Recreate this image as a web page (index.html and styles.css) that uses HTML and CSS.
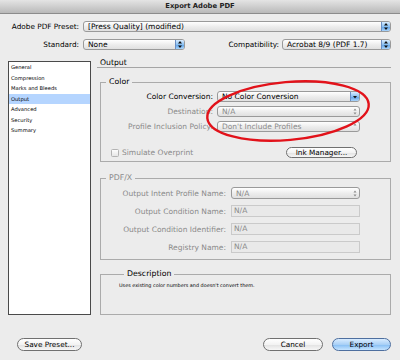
FILE: index.html
```html
<!DOCTYPE html>
<html lang="en">
<head>
    <meta charset="UTF-8">
    <title>Export Adobe PDF</title>
    <link rel="stylesheet" href="styles.css">
</head>
<body>
    <div class="titlebar">Export Adobe PDF</div>

    <div class="presets">
        <div class="preset-row">
            <label class="row-label">Adobe PDF Preset:</label>
            <div class="popup grow">
                <span class="value">[Press Quality] (modified)</span>
                <span class="stepper active"><svg width="4" height="7" viewBox="0 0 4 7"><path d="M0 2.6L2 0L4 2.6Z M0 4.4L2 7L4 4.4Z"/></svg></span>
            </div>
        </div>
        <div class="preset-row">
            <label class="row-label">Standard:</label>
            <div class="popup standard">
                <span class="value">None</span>
                <span class="stepper active"><svg width="4" height="7" viewBox="0 0 4 7"><path d="M0 2.6L2 0L4 2.6Z M0 4.4L2 7L4 4.4Z"/></svg></span>
            </div>
            <label class="compat-label">Compatibility:</label>
            <div class="popup compat">
                <span class="value">Acrobat 8/9 (PDF 1.7)</span>
                <span class="stepper active"><svg width="4" height="7" viewBox="0 0 4 7"><path d="M0 2.6L2 0L4 2.6Z M0 4.4L2 7L4 4.4Z"/></svg></span>
            </div>
        </div>
    </div>

    <div class="main">
        <ul class="sections">
            <li>General</li>
            <li>Compression</li>
            <li>Marks and Bleeds</li>
            <li class="selected">Output</li>
            <li>Advanced</li>
            <li>Security</li>
            <li>Summary</li>
        </ul>

        <div class="panel">
            <div class="panel-title">Output</div>

            <fieldset class="group color-group">
                <legend>Color</legend>
                <div class="form-grid">
                    <label>Color Conversion:</label>
                    <div class="popup">
                        <span class="value">No Color Conversion</span>
                        <span class="stepper active"><svg width="4" height="7" viewBox="0 0 4 7"><path d="M0 3L2 5.6L4 3Z"/></svg></span>
                    </div>
                    <label class="disabled">Destination:</label>
                    <div class="popup disabled">
                        <span class="value">N/A</span>
                        <span class="stepper"><svg width="4" height="7" viewBox="0 0 4 7"><path d="M0.5 2.4L2 0.4L3.5 2.4Z M0.5 4.6L2 6.6L3.5 4.6Z"/></svg></span>
                    </div>
                    <label class="disabled">Profile Inclusion Policy:</label>
                    <div class="popup disabled">
                        <span class="value">Don't Include Profiles</span>
                        <span class="stepper"><svg width="4" height="7" viewBox="0 0 4 7"><path d="M0.5 2.4L2 0.4L3.5 2.4Z"/></svg></span>
                    </div>
                </div>
                <div class="check-row">
                    <label class="checkbox disabled"><span class="box"></span>Simulate Overprint</label>
                    <button class="pill ink">Ink Manager...</button>
                </div>
            </fieldset>

            <fieldset class="group pdfx-group">
                <legend class="disabled">PDF/X</legend>
                <div class="form-grid">
                    <label class="disabled">Output Intent Profile Name:</label>
                    <div class="popup disabled">
                        <span class="value">N/A</span>
                        <span class="stepper"><svg width="4" height="7" viewBox="0 0 4 7"><path d="M0.5 2.4L2 0.4L3.5 2.4Z M0.5 4.6L2 6.6L3.5 4.6Z"/></svg></span>
                    </div>
                    <label class="disabled">Output Condition Name:</label>
                    <div class="textfield">N/A</div>
                    <label class="disabled">Output Condition Identifier:</label>
                    <div class="textfield">N/A</div>
                    <label class="disabled">Registry Name:</label>
                    <div class="textfield">N/A</div>
                </div>
            </fieldset>

            <fieldset class="group description-group">
                <legend>Description</legend>
                <p class="description">Uses existing color numbers and doesn't convert them.</p>
            </fieldset>
        </div>
    </div>

    <div class="footer">
        <button class="pill save">Save Preset...</button>
        <button class="pill cancel">Cancel</button>
        <button class="pill export">Export</button>
    </div>

    <!-- red hand-drawn marker around the color settings -->
    <svg class="annotation" width="184" height="76" viewBox="0 0 184 76">
        <ellipse cx="88" cy="36" rx="81" ry="29" transform="rotate(-5 88 36)" fill="none" stroke="#e2121a" stroke-width="2.4"/>
    </svg>
</body>
</html>
```

FILE: styles.css
```css
* {
    box-sizing: border-box;
}
body {
    margin: 0;
    width: 400px;
    height: 360px;
    position: relative;
    overflow: hidden;
    background-color: #ececec;
    font-family: "DejaVu Sans", sans-serif;
    font-size: 7.5px;
    color: #000;
}
.disabled {
    color: #8a8a8a;
}
.titlebar {
    height: 14px;
    line-height: 13px;
    text-align: center;
    font-weight: bold;
    font-size: 6.8px;
    color: #222;
    background: linear-gradient(#e4e4e4, #b9b9b9);
    border-bottom: 1px solid #8c8c8c;
}
.presets {
    padding: 7px 9px 0 0;
    display: flex;
    flex-direction: column;
    gap: 7px;
    white-space: nowrap;
}
.preset-row {
    display: flex;
    align-items: center;
    height: 11px;
}
.row-label {
    width: 79px;
    flex-shrink: 0;
    text-align: right;
    margin-right: 4px;
    font-size: 7.3px;
}
.compat-label {
    flex: 1;
    text-align: right;
    margin-right: 3px;
    font-size: 7.3px;
}
.popup {
    height: 11px;
    display: flex;
    align-items: center;
    padding-left: 4px;
    border: 1px solid #9a9a9a;
    border-radius: 3px;
    background: linear-gradient(#ffffff, #ececec 55%, #e0e0e0);
    overflow: hidden;
    white-space: nowrap;
}
.popup.grow {
    flex: 1;
}
.popup.standard {
    width: 102px;
}
.popup.compat {
    width: 109px;
}
.popup .value {
    flex: 1;
}
.stepper {
    width: 9px;
    height: 100%;
    display: flex;
    align-items: center;
    justify-content: center;
}
.stepper.active {
    background: linear-gradient(#d9ecff, #8cc1f2 50%, #5c9fe4 51%, #a9d4fb);
    border-left: 1px solid #6b8fc4;
}
.stepper svg {
    fill: #111;
}
.popup.disabled .stepper svg {
    fill: #8a8a8a;
}
.main {
    display: flex;
    gap: 6px;
    margin-top: 8px;
    padding: 0 9px 0 8px;
}
.sections {
    list-style: none;
    margin: 3px 0 0;
    padding: 0;
    width: 83px;
    height: 254px;
    flex-shrink: 0;
    background-color: #fff;
    border: 1px solid #4a4a4a;
    font-size: 5.2px;
}
.sections li {
    height: 10.5px;
    line-height: 10.5px;
    padding-left: 2px;
}
.sections li.selected {
    background-color: #b5d5ff;
}
.panel {
    flex: 1;
}
.panel-title {
    line-height: 9px;
    font-size: 7.7px;
    padding-left: 3px;
    border-bottom: 1px solid #a5a5a5;
}
.group {
    margin: 9px 0 0 3px;
    padding: 4px 30px 3px 0;
    border: 1px solid #ababab;
    min-width: 0;
}
.group legend {
    margin-left: 5px;
    padding: 0 3px;
    line-height: 10px;
    font-size: 7.8px;
}
.form-grid {
    display: grid;
    align-items: center;
    text-align: right;
    white-space: nowrap;
}
.form-grid .popup,
.form-grid .textfield {
    text-align: left;
}
.color-group .form-grid {
    grid-template-columns: 1fr 143px;
    column-gap: 4px;
    row-gap: 4px;
}
.check-row {
    display: flex;
    align-items: center;
    margin-top: 15px;
    padding-left: 10px;
}
.checkbox {
    display: flex;
    align-items: center;
}
.checkbox .box {
    width: 8px;
    height: 8px;
    margin-right: 3px;
    border: 1px solid #b3b3b3;
    border-radius: 1.5px;
    background: linear-gradient(#fdfdfd, #e6e6e6);
}
.pill {
    height: 11px;
    padding: 0;
    font-family: "DejaVu Sans", sans-serif;
    font-size: 7.3px;
    color: #000;
    border: 1px solid #707070;
    border-radius: 7px;
    background: linear-gradient(#ffffff, #f3f3f3 50%, #e1e1e1 51%, #f7f7f7);
}
.pill.ink {
    width: 71px;
    margin-left: auto;
    margin-right: 3px;
}
.pdfx-group {
    margin-top: 11px;
    padding-bottom: 6px;
}
.pdfx-group .form-grid {
    grid-template-columns: 1fr 129px;
    column-gap: 5px;
    row-gap: 6px;
}
.pdfx-group .popup {
    height: 12px;
}
.textfield {
    height: 12px;
    line-height: 10px;
    padding-left: 2px;
    color: #8a8a8a;
    border: 1px solid #cacaca;
    background-color: #e9e9e9;
}
.description-group {
    height: 46px;
    padding: 3px 4px 0 18px;
}
.description {
    margin: 0;
    font-size: 4.9px;
    line-height: 7px;
}
.footer {
    display: flex;
    gap: 9px;
    margin-top: 23px;
    padding: 0 9px 0 17px;
}
.footer .pill {
    height: 13px;
}
.pill.save {
    width: 65px;
}
.pill.cancel {
    width: 60px;
    margin-left: auto;
}
.pill.export {
    width: 59px;
    border-color: #4e6f9f;
    background: linear-gradient(#d9ecff, #a9d0f6 50%, #84bdf3 51%, #c6e4ff);
}
.annotation {
    position: absolute;
    left: 200px;
    top: 75px;
}
```
